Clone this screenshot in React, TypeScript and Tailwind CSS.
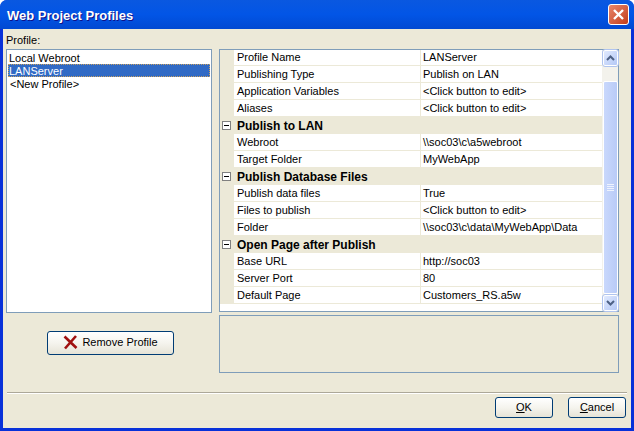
const F = "[font-family:'Liberation_Sans',Arial,sans-serif]";
type R = { c?: string; n?: string; v?: string };
const rows: R[] = [
  { n: 'Profile Name', v: 'LANServer' },
  { n: 'Publishing Type', v: 'Publish on LAN' },
  { n: 'Application Variables', v: '<Click button to edit>' },
  { n: 'Aliases', v: '<Click button to edit>' },
  { c: 'Publish to LAN' },
  { n: 'Webroot', v: '\\\\soc03\\c\\a5webroot' },
  { n: 'Target Folder', v: 'MyWebApp' },
  { c: 'Publish Database Files' },
  { n: 'Publish data files', v: 'True' },
  { n: 'Files to publish', v: '<Click button to edit>' },
  { n: 'Folder', v: '\\\\soc03\\c\\data\\MyWebApp\\Data' },
  { c: 'Open Page after Publish' },
  { n: 'Base URL', v: 'http://soc03' },
  { n: 'Server Port', v: '80' },
  { n: 'Default Page', v: 'Customers_RS.a5w' },
];

function XpButton({ className, children }: { className: string; children: React.ReactNode }) {
  return (
    <div className={`flex items-center justify-center rounded-[3px] border border-[#003c74] bg-gradient-to-b from-white via-[#f5f4ee] to-[#e6e3d6] pb-px text-[11px] text-black ${className}`}>
      {children}
    </div>
  );
}

function Row({ r, first }: { r: R; first: boolean }) {
  if (r.c)
    return (
      <div className="flex h-[17px] items-center bg-[#ece9d8]">
        <div className="flex w-[13px] pl-[2px]">
          <div className="flex h-[9px] w-[9px] items-center justify-center border border-[#808080] bg-white">
            <div className="h-px w-[5px] bg-black" />
          </div>
        </div>
        <span className="pl-[4px] text-[12px] leading-none font-bold text-black">{r.c}</span>
      </div>
    );
  return (
    <div className={`flex bg-[#ece9d8] ${first ? 'h-[16px]' : 'h-[17px]'}`}>
      <div className="w-[14px] shrink-0" />
      <div className={`flex w-[186px] items-center bg-white pl-[3px] whitespace-nowrap ${first ? 'h-[15px]' : 'h-[16px]'}`}>{r.n}</div>
      <div className={`ml-px flex flex-1 items-center bg-white pl-[2px] whitespace-nowrap ${first ? 'h-[15px]' : 'h-[16px]'}`}>{r.v}</div>
    </div>
  );
}

function Chevron({ up }: { up?: boolean }) {
  return (
    <svg width="9" height="6" viewBox="0 0 9 6">
      <path d={up ? 'M1 5 L4.5 1.5 L8 5' : 'M1 1 L4.5 4.5 L8 1'} fill="none" stroke="#4d6185" strokeWidth="2" />
    </svg>
  );
}

function ScrollBtn({ up }: { up?: boolean }) {
  return (
    <div className="flex h-[16px] w-[15px] items-center justify-center rounded-[2px] border border-white bg-gradient-to-br from-[#e1eafe] to-[#b4c8f6] outline outline-1 outline-[#b0c4ee]">
      <Chevron up={up} />
    </div>
  );
}

function Scrollbar() {
  return (
    <div className="flex w-[16px] shrink-0 flex-col items-center bg-[#f3f2ec]">
      <ScrollBtn up />
      <div className="h-[15px] shrink-0" />
      <div className="flex w-[15px] flex-1 flex-col items-center justify-center gap-px rounded-[2px] border border-white bg-gradient-to-r from-[#c9d8fc] to-[#b9cbf7]">
        {[0, 1, 2, 3].map((i) => (
          <div key={i} className="h-px w-[7px] bg-[#eef3fe]" />
        ))}
      </div>
      <div className="h-px shrink-0" />
      <ScrollBtn />
    </div>
  );
}

export default function App() {
  return (
    <div className={`flex h-[431px] w-[634px] flex-col overflow-hidden rounded-t-[7px] bg-[#0831d9] ${F} text-[11px] text-black`}>
      <div className="flex h-[29px] shrink-0 items-center justify-between bg-gradient-to-b from-[#0a58e0] via-[#0255e6] to-[#0149d2] pr-[5px] pl-[7px]">
        <span className="pt-[2px] text-[13px] font-bold text-white [text-shadow:1px_1px_#0f1089]">Web Project Profiles</span>
        <div className="flex h-[21px] w-[21px] items-center justify-center rounded-[3px] border border-white bg-gradient-to-br from-[#e8866b] to-[#c23a14]">
          <svg width="13" height="13" viewBox="0 0 13 13">
            <path d="M2 2 L11 11 M11 2 L2 11" stroke="#fff" strokeWidth="2.4" />
          </svg>
        </div>
      </div>
      <div className="mx-[3px] mb-[3px] flex flex-1 flex-col bg-[#ece9d8]">
        <div className="flex flex-1 gap-[7px] pr-[12px] pl-[3px]">
          <div className="flex w-[206px] shrink-0 flex-col">
            <div className="flex h-[20px] items-center pt-[2px]">Profile:</div>
            <div className="flex h-[264px] flex-col border border-[#7f9db9] bg-white pt-px pr-px pl-px leading-[14px]">
              <div className="h-[13px] pl-[1px]">Local Webroot</div>
              <div className="h-[13px] bg-[#316ac5] pl-[1px] text-white outline-1 -outline-offset-1 outline-[#c8a060] outline-dotted">LANServer</div>
              <div className="h-[13px] pl-[2px]">&lt;New Profile&gt;</div>
            </div>
            <div className="mt-[18px] flex justify-center pl-[3px]">
              <XpButton className="h-[24px] w-[127px] gap-[4px]">
                <svg width="15" height="15" viewBox="0 0 15 15">
                  <path d="M1.5 1.5 L13.5 13 M13 1 L2 13.5" stroke="#a01010" strokeWidth="2.6" />
                </svg>
                Remove Profile
              </XpButton>
            </div>
          </div>
          <div className="flex w-[400px] flex-col pt-[20px]">
            <div className="flex h-[263px] border border-[#7f9db9] bg-white">
              <div className="flex-1 text-[11px] leading-none">
                {rows.map((r, i) => (
                  <Row key={i} r={r} first={i === 0} />
                ))}
              </div>
              <Scrollbar />
            </div>
            <div className="mt-[3px] h-[58px] border border-[#7f9db9] bg-[#ece9d8]" />
          </div>
        </div>
        <div className="mx-[4px] border-t border-b border-t-[#aca899] border-b-white" />
        <div className="flex h-[34px] justify-end gap-[15px] pt-[3px] pr-[5px]">
          <XpButton className="h-[21px] w-[58px]"><span><span className="underline">O</span>K</span></XpButton>
          <XpButton className="h-[21px] w-[58px]"><span><span className="underline">C</span>ancel</span></XpButton>
        </div>
      </div>
    </div>
  );
}
